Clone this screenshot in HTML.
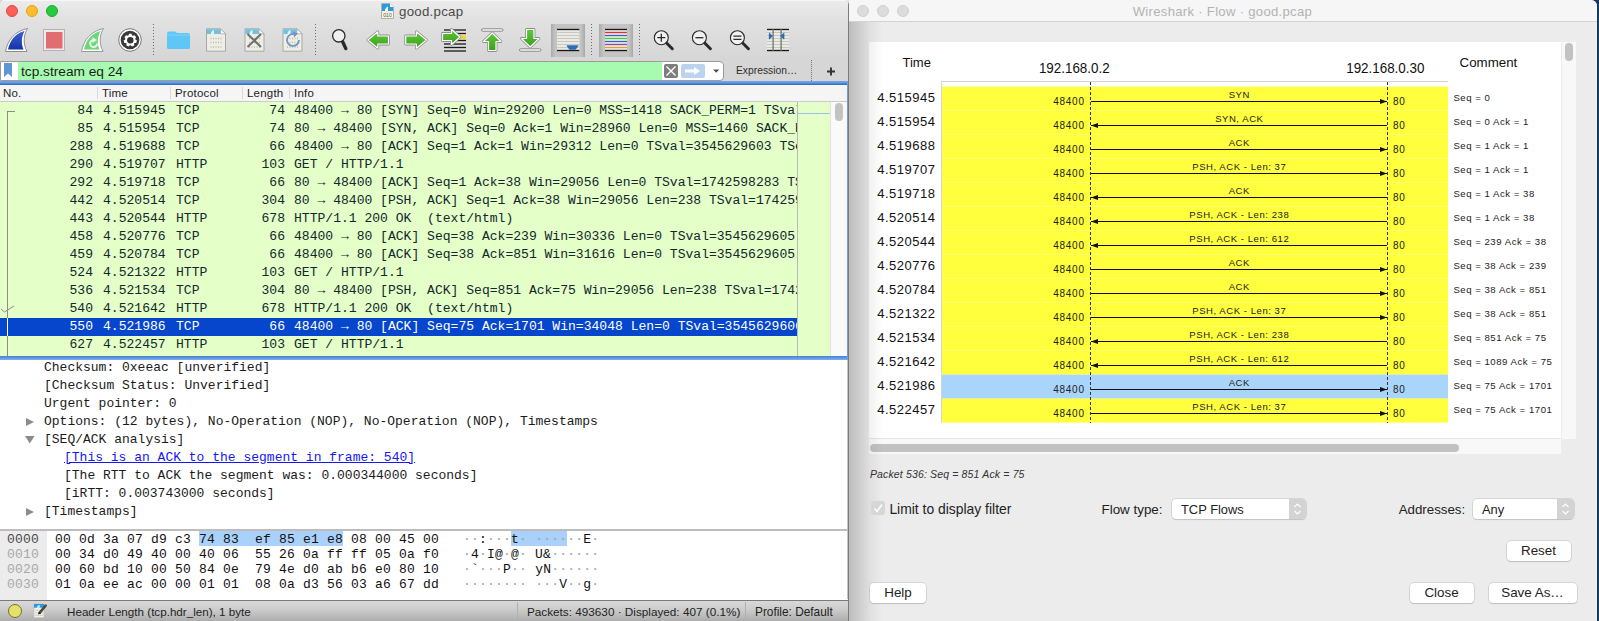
<!DOCTYPE html>
<html><head><meta charset="utf-8">
<style>
*{box-sizing:border-box}
html,body{margin:0;padding:0}
body{width:1599px;height:621px;overflow:hidden;position:relative;background:#183a60;font-family:"Liberation Sans",sans-serif;}
.a{position:absolute}
.mono{font-family:"Liberation Mono",monospace}
.t{position:absolute;white-space:pre;line-height:1}
</style></head><body>

<div class="a" style="left:0;top:0;width:12px;height:12px;background:#d9d9d9"></div>
<div class="a" style="left:838px;top:0;width:22px;height:10px;background:#e4e4e4"></div>
<div class="a" id="main" style="left:0;top:0;width:849px;height:621px;background:#d6d6d6;overflow:hidden;border-top-left-radius:5px;border-top-right-radius:5px">
<div class="a" style="left:0;top:0;width:849px;height:59px;background:linear-gradient(#ececec,#e2e2e2 30%,#d6d6d6)"></div>
<div class="a" style="left:0;top:0;width:849px;height:1px;background:#f7f7f7"></div>
<div class="a" style="left:6px;top:5px;width:12px;height:12px;border-radius:50%;background:#fe5f57;border:0.5px solid #e2463f"></div>
<div class="a" style="left:26px;top:5px;width:12px;height:12px;border-radius:50%;background:#febc2e;border:0.5px solid #e1a116"></div>
<div class="a" style="left:46px;top:5px;width:12px;height:12px;border-radius:50%;background:#28c840;border:0.5px solid #14ae2a"></div>
<div class="t" style="left:399px;top:5.2px;font-size:13.3px;letter-spacing:0.25px;color:#4a4a4a">good.pcap</div>
<svg class="a" style="left:381px;top:3px" width="13" height="16"><path d="M0.5 0.5H9L12.5 4V15.5H0.5Z" fill="#f6f3dc" stroke="#a0a0a0" stroke-width="0.8"/><path d="M1 1H9V4H12V8H1Z" fill="#2a9be0"/><path d="M4 8C4 6 5 4 7 3.5V8Z" fill="#fff"/><path d="M9 0.5V4H12.5Z" fill="#fff"/><text x="6.5" y="13.5" font-size="5" text-anchor="middle" fill="#555" font-family="Liberation Sans">010</text></svg>
<svg class="a" style="left:0;top:0" width="849" height="59" viewBox="0 0 849 59"><defs><linearGradient id="gb" x1="0" y1="0" x2="0" y2="1"><stop offset="0" stop-color="#3d5fd6"/><stop offset="1" stop-color="#1535a6"/></linearGradient><linearGradient id="gg" x1="0" y1="0" x2="0" y2="1"><stop offset="0" stop-color="#5fc93a"/><stop offset="1" stop-color="#3c9e1e"/></linearGradient><linearGradient id="pb" x1="0" y1="0" x2="1" y2="0"><stop offset="0" stop-color="#a9a9a9"/><stop offset="0.12" stop-color="#c4c4c4"/><stop offset="0.88" stop-color="#c4c4c4"/><stop offset="1" stop-color="#a9a9a9"/></linearGradient></defs><path d="M5.5 51.5C7.5 40 15 31 27.5 28.5C24 34 22.5 43 27 51.5Z" fill="#fff" stroke="#8e8e8e" stroke-width="1"/><path d="M8 49.5C10 40 16 33 24.5 31C22 36 20.5 42 23.5 49.5Z" fill="url(#gb)"/><rect x="43.5" y="29.5" width="21" height="21" fill="#ececec" stroke="#b3b3b3" stroke-width="1"/><rect x="46" y="32" width="16.5" height="16.5" fill="#e16c72"/><path d="M81.5 51.5C83.5 40 91 31 103.5 28.5C100 34 98.5 43 103 51.5Z" fill="#fff" stroke="#9a9a9a" stroke-width="1"/><path d="M84 49.5C86 40 92 33 100.5 31C98 36 96.5 42 99.5 49.5Z" fill="#6cd87a"/><path d="M97.2 43.5A3.5 3.5 0 1 1 93.7 40" fill="none" stroke="#e8f5e8" stroke-width="1.9"/><path d="M92.5 37L97 40L92.5 43Z" fill="#e8f5e8"/><circle cx="130" cy="40" r="11.3" fill="#fff" stroke="#777" stroke-width="1"/><circle cx="130" cy="40" r="9.3" fill="#3a3a3a"/><path d="M128.50 35.43 L128.99 33.73 L131.61 33.73 L132.10 35.43 L132.91 35.82 L134.54 35.14 L136.17 37.19 L135.15 38.63 L135.35 39.51 L136.90 40.36 L136.31 42.92 L134.55 43.01 L133.99 43.72 L134.29 45.46 L131.93 46.60 L130.75 45.28 L129.85 45.28 L128.67 46.60 L126.31 45.46 L126.61 43.72 L126.05 43.01 L124.29 42.92 L123.70 40.36 L125.25 39.51 L125.45 38.63 L124.43 37.19 L126.06 35.14 L127.69 35.82Z" fill="#fff"/><circle cx="130.3" cy="40.2" r="3.2" fill="#333"/><line x1="153.5" y1="24" x2="153.5" y2="55" stroke="#6a6a6a" stroke-width="1" stroke-dasharray="1,2"/><line x1="315.5" y1="24" x2="315.5" y2="55" stroke="#6a6a6a" stroke-width="1" stroke-dasharray="1,2"/><line x1="591.5" y1="24" x2="591.5" y2="55" stroke="#6a6a6a" stroke-width="1" stroke-dasharray="1,2"/><line x1="639.5" y1="24" x2="639.5" y2="55" stroke="#6a6a6a" stroke-width="1" stroke-dasharray="1,2"/><path d="M167 33.5Q167 31.5 169 31.5H175L177 33H188.5Q190 33 190 34.5V47.5Q190 49 188.5 49H168.5Q167 49 167 47.5Z" fill="#5ec7f6"/><rect x="167" y="34.5" width="23" height="1" fill="#7fd6fb"/><path d="M206.5 28.8H220.5 L225.5 33.8V51.2H206.5Z" fill="#efeee4" stroke="#a7a7a7" stroke-width="1"/><path d="M207 29.3H220.3V34H207Z" fill="#6ec1e6"/><path d="M220.5 28.8V33.8H225.5Z" fill="#fff" stroke="#a7a7a7" stroke-width="0.8"/><path d="M211 34C211 32 212 30.5 214 30V34Z" fill="#efeee4"/><line x1="210.5" y1="38.5" x2="222" y2="38.5" stroke="#b9b9ae" stroke-width="1.6" stroke-dasharray="1,1.5"/><line x1="210.5" y1="42.5" x2="222" y2="42.5" stroke="#b9b9ae" stroke-width="1.6" stroke-dasharray="1,1.5"/><line x1="210.5" y1="47" x2="222" y2="47" stroke="#b9b9ae" stroke-width="1.6" stroke-dasharray="1,1.5"/><path d="M245.0 28.8H259.0 L264.0 33.8V51.2H245.0Z" fill="#efeee4" stroke="#a7a7a7" stroke-width="1"/><path d="M245.5 29.3H258.8V34H245.5Z" fill="#6ec1e6"/><path d="M259.0 28.8V33.8H264.0Z" fill="#fff" stroke="#a7a7a7" stroke-width="0.8"/><path d="M249.5 34C249.5 32 250.5 30.5 252.5 30V34Z" fill="#efeee4"/><line x1="249.0" y1="38.5" x2="260.5" y2="38.5" stroke="#b9b9ae" stroke-width="1.6" stroke-dasharray="1,1.5"/><line x1="249.0" y1="42.5" x2="260.5" y2="42.5" stroke="#b9b9ae" stroke-width="1.6" stroke-dasharray="1,1.5"/><line x1="249.0" y1="47" x2="260.5" y2="47" stroke="#b9b9ae" stroke-width="1.6" stroke-dasharray="1,1.5"/><path d="M247.5 34L261.0 47M261.0 34L247.5 47" stroke="#707070" stroke-width="2"/><path d="M283.0 28.8H297.0 L302.0 33.8V51.2H283.0Z" fill="#efeee4" stroke="#a7a7a7" stroke-width="1"/><path d="M283.5 29.3H296.8V34H283.5Z" fill="#6ec1e6"/><path d="M297.0 28.8V33.8H302.0Z" fill="#fff" stroke="#a7a7a7" stroke-width="0.8"/><path d="M287.5 34C287.5 32 288.5 30.5 290.5 30V34Z" fill="#efeee4"/><line x1="287.0" y1="38.5" x2="298.5" y2="38.5" stroke="#b9b9ae" stroke-width="1.6" stroke-dasharray="1,1.5"/><line x1="287.0" y1="42.5" x2="298.5" y2="42.5" stroke="#b9b9ae" stroke-width="1.6" stroke-dasharray="1,1.5"/><line x1="287.0" y1="47" x2="298.5" y2="47" stroke="#b9b9ae" stroke-width="1.6" stroke-dasharray="1,1.5"/><path d="M295.5 34.5A6 6 0 1 0 299.0 40" fill="none" stroke="#6f95c4" stroke-width="1.8"/><path d="M293.0 31.5L298.0 33.5L294.0 37.5Z" fill="#6f95c4"/><circle cx="338.8" cy="35.8" r="6.2" fill="#f1f1f1" stroke="#2a2a2a" stroke-width="1.3"/><line x1="342.8" y1="42" x2="345.8" y2="48.6" stroke="#2a2a2a" stroke-width="3.4" stroke-linecap="round"/><path d="M367.8 40L377.8 31.8V36H388.5V44H377.8V48.2Z" fill="none" stroke="#8e8e8e" stroke-width="2.8" stroke-linejoin="round"/><path d="M367.8 40L377.8 31.8V36H388.5V44H377.8V48.2Z" fill="url(#gg)" stroke="#fff" stroke-width="1.2" stroke-linejoin="round"/><path d="M426.4 40L416.4 31.8V36H405.7V44H416.4V48.2Z" fill="none" stroke="#8e8e8e" stroke-width="2.8" stroke-linejoin="round"/><path d="M426.4 40L416.4 31.8V36H405.7V44H416.4V48.2Z" fill="url(#gg)" stroke="#fff" stroke-width="1.2" stroke-linejoin="round"/><rect x="444" y="29.35" width="22" height="1.3" fill="#1a1a1a"/><rect x="444" y="32.85" width="22" height="1.3" fill="#1a1a1a"/><rect x="444" y="36.35" width="22" height="1.3" fill="#1a1a1a"/><rect x="444" y="39.85" width="22" height="1.3" fill="#1a1a1a"/><rect x="444" y="43.35" width="22" height="1.3" fill="#1a1a1a"/><rect x="444" y="46.85" width="22" height="1.3" fill="#1a1a1a"/><rect x="444" y="50.35" width="22" height="1.3" fill="#1a1a1a"/><rect x="457" y="35.5" width="9" height="3.5" fill="#f5d52a"/><path d="M460 37L451.5 29.5V33.5H442.5V40.5H451.5V44.5Z" fill="none" stroke="#8e8e8e" stroke-width="2.8" stroke-linejoin="round"/><path d="M460 37L451.5 29.5V33.5H442.5V40.5H451.5V44.5Z" fill="url(#gg)" stroke="#fff" stroke-width="1.2" stroke-linejoin="round"/><rect x="481.5" y="28.8" width="21.5" height="2.4" rx="1.2" fill="#fff" stroke="#7c7c7c" stroke-width="0.9"/><path d="M492.2 33L501 41.5H496V50.5H488.5V41.5H483.5Z" fill="none" stroke="#8e8e8e" stroke-width="2.8" stroke-linejoin="round"/><path d="M492.2 33L501 41.5H496V50.5H488.5V41.5H483.5Z" fill="url(#gg)" stroke="#fff" stroke-width="1.2" stroke-linejoin="round"/><rect x="519.5" y="48.8" width="21.5" height="2.4" rx="1.2" fill="#fff" stroke="#7c7c7c" stroke-width="0.9"/><path d="M530.2 47L539 38.5H534V29.5H526.5V38.5H521.5Z" fill="none" stroke="#8e8e8e" stroke-width="2.8" stroke-linejoin="round"/><path d="M530.2 47L539 38.5H534V29.5H526.5V38.5H521.5Z" fill="url(#gg)" stroke="#fff" stroke-width="1.2" stroke-linejoin="round"/><rect x="551" y="24" width="34" height="33" fill="url(#pb)"/><rect x="557" y="29" width="22.3" height="22" fill="#f4f4f0"/><rect x="557" y="28.8" width="22.3" height="1.4" fill="#1a1a1a"/><rect x="557" y="31.8" width="22.3" height="1.4" fill="#c8c8be"/><rect x="557" y="34.8" width="22.3" height="1.4" fill="#c8c8be"/><rect x="557" y="37.8" width="22.3" height="1.4" fill="#c8c8be"/><rect x="557" y="40.8" width="22.3" height="1.4" fill="#c8c8be"/><rect x="557" y="43.8" width="22.3" height="1.4" fill="#c8c8be"/><rect x="557" y="46.8" width="22.3" height="1.4" fill="#c8c8be"/><rect x="557" y="49.8" width="22.3" height="1.4" fill="#1a1a1a"/><path d="M566.5 45.3H578.5Q578 47 575.5 49.8H569.5Q567 47 566.5 45.3Z" fill="#2d6db4"/><rect x="599" y="24" width="34" height="33" fill="url(#pb)"/><rect x="605" y="29" width="22" height="22" fill="#f4f4f0"/><rect x="605" y="28.8" width="22" height="1.4" fill="#1a1a1a"/><rect x="605" y="31.8" width="22" height="1.4" fill="#e03030"/><rect x="605" y="34.8" width="22" height="1.4" fill="#2f66c0"/><rect x="605" y="37.8" width="22" height="1.4" fill="#55c040"/><rect x="605" y="40.8" width="22" height="1.4" fill="#2f66c0"/><rect x="605" y="43.8" width="22" height="1.4" fill="#8a4a9a"/><rect x="605" y="46.8" width="22" height="1.4" fill="#d9a030"/><rect x="605" y="49.8" width="22" height="1.4" fill="#1a1a1a"/><circle cx="661.3" cy="37.7" r="7" fill="#f1f1f1" stroke="#2a2a2a" stroke-width="1.1"/><line x1="666.8" y1="43.2" x2="672.3" y2="48.7" stroke="#2a2a2a" stroke-width="3" stroke-linecap="round"/><path d="M657.3 37.7H665.3M661.3 33.7V41.7" stroke="#2a2a2a" stroke-width="1.3"/><circle cx="699.4" cy="37.7" r="7" fill="#f1f1f1" stroke="#2a2a2a" stroke-width="1.1"/><line x1="704.9" y1="43.2" x2="710.4" y2="48.7" stroke="#2a2a2a" stroke-width="3" stroke-linecap="round"/><path d="M695.4 37.7H703.4" stroke="#2a2a2a" stroke-width="1.3"/><circle cx="737.4" cy="37.7" r="7" fill="#f1f1f1" stroke="#2a2a2a" stroke-width="1.1"/><line x1="742.9" y1="43.2" x2="748.4" y2="48.7" stroke="#2a2a2a" stroke-width="3" stroke-linecap="round"/><path d="M733.4 36.1H741.4M733.4 39.300000000000004H741.4" stroke="#2a2a2a" stroke-width="1.2"/><rect x="767" y="29" width="22" height="22" fill="#f4f4f0"/><rect x="767" y="28.8" width="22" height="1.4" fill="#1a1a1a"/><rect x="767" y="31.8" width="22" height="1.4" fill="#c8c8be"/><rect x="767" y="34.8" width="22" height="1.4" fill="#c8c8be"/><rect x="767" y="37.8" width="22" height="1.4" fill="#c8c8be"/><rect x="767" y="40.8" width="22" height="1.4" fill="#c8c8be"/><rect x="767" y="43.8" width="22" height="1.4" fill="#c8c8be"/><rect x="767" y="46.8" width="22" height="1.4" fill="#c8c8be"/><rect x="767" y="49.8" width="22" height="1.4" fill="#1a1a1a"/><rect x="772.5" y="29" width="1.2" height="22" fill="#6a6a6a"/><rect x="780.5" y="29" width="1.2" height="22" fill="#6a6a6a"/><path d="M769 32.5Q768.5 36 769 39.7L773 36.1Z" fill="#2d6db4"/><path d="M784.2 32.5Q784.7 36 784.2 39.7L780.2 36.1Z" fill="#2d6db4"/></svg>
<div class="a" style="left:0;top:61px;width:724px;height:20px;border:1px solid #9b9b9b;border-radius:0 4px 4px 0;background:#fff"></div>
<div class="a" style="left:18px;top:62px;width:644px;height:18px;background:#a7fbb0"></div>
<svg class="a" style="left:3px;top:63px" width="10" height="15" viewBox="0 0 10 15"><path d="M1 0H9V14L5 10.5L1 14Z" fill="#5f95d3"/></svg>
<div class="t" style="left:21px;top:65px;font-size:13.7px;color:#1b1b1b">tcp.stream eq 24</div>
<div class="a" style="left:664px;top:64px;width:14px;height:14px;background:#7d7d7d;border-radius:2px"></div>
<svg class="a" style="left:664px;top:64px" width="14" height="14"><path d="M2.5 2.5L11.5 11.5M11.5 2.5L2.5 11.5" stroke="#fff" stroke-width="1.4"/></svg>
<div class="a" style="left:681px;top:64px;width:24px;height:14px;background:#bcd3ef;border-radius:2px"></div>
<svg class="a" style="left:681px;top:64px" width="24" height="14"><path d="M4 5.5H13V3L19 7L13 11V8.5H4Z" fill="#fff"/></svg>
<svg class="a" style="left:712px;top:69px" width="9" height="5"><path d="M1.2 0.5H7.2L4.2 3.8Z" fill="#4a4a4a"/></svg>
<div class="t" style="left:736px;top:66px;font-size:10.3px;color:#2e2e2e">Expression…</div>
<div class="a" style="left:811px;top:60px;width:1px;height:23px;border-left:1px dotted #777"></div>
<svg class="a" style="left:825px;top:66px" width="12" height="12"><path d="M6 1.5V9.5M2 5.5H10" stroke="#333" stroke-width="1.9"/></svg>
<div class="a" style="left:0;top:81px;width:849px;height:4px;background:linear-gradient(#70a4ea,#6a9ee6 35%,#2b66b2)"></div>
<div class="a" style="left:0;top:85px;width:849px;height:17px;background:#f5f5f5;border-bottom:1px solid #cbcbcb"></div>
<div class="a" style="left:97px;top:87px;width:1px;height:12px;background:#d9d9d9"></div>
<div class="a" style="left:170px;top:87px;width:1px;height:12px;background:#d9d9d9"></div>
<div class="a" style="left:242px;top:87px;width:1px;height:12px;background:#d9d9d9"></div>
<div class="a" style="left:289px;top:87px;width:1px;height:12px;background:#d9d9d9"></div>
<div class="t" style="left:3px;top:88px;font-size:11.5px;letter-spacing:0.2px;color:#1e1e1e">No.</div>
<div class="t" style="left:102px;top:88px;font-size:11.5px;letter-spacing:0.2px;color:#1e1e1e">Time</div>
<div class="t" style="left:175px;top:88px;font-size:11.5px;letter-spacing:0.2px;color:#1e1e1e">Protocol</div>
<div class="t" style="left:247px;top:88px;font-size:11.5px;letter-spacing:0.2px;color:#1e1e1e">Length</div>
<div class="t" style="left:294px;top:88px;font-size:11.5px;letter-spacing:0.2px;color:#1e1e1e">Info</div>
<div class="a" style="left:0;top:102px;width:849px;height:254px;background:#e4ffc7"></div>
<div class="t mono" style="left:0;top:102px;width:93px;text-align:right;font-size:13.05px;line-height:18px;color:#12272e">84</div>
<div class="t mono" style="left:103px;top:102px;font-size:13.05px;line-height:18px;color:#12272e">4.515945</div>
<div class="t mono" style="left:176px;top:102px;font-size:13.05px;line-height:18px;color:#12272e">TCP</div>
<div class="t mono" style="left:243px;top:102px;width:42px;text-align:right;font-size:13.05px;line-height:18px;color:#12272e">74</div>
<div class="a" style="left:294px;top:102px;width:503px;height:18px;overflow:hidden"><div class="t mono" style="left:0;top:0;font-size:13.05px;line-height:18px;color:#12272e">48400 → 80 [SYN] Seq=0 Win=29200 Len=0 MSS=1418 SACK_PERM=1 TSval=3545629602 TSecr=0 WS=128</div></div>
<div class="t mono" style="left:0;top:120px;width:93px;text-align:right;font-size:13.05px;line-height:18px;color:#12272e">85</div>
<div class="t mono" style="left:103px;top:120px;font-size:13.05px;line-height:18px;color:#12272e">4.515954</div>
<div class="t mono" style="left:176px;top:120px;font-size:13.05px;line-height:18px;color:#12272e">TCP</div>
<div class="t mono" style="left:243px;top:120px;width:42px;text-align:right;font-size:13.05px;line-height:18px;color:#12272e">74</div>
<div class="a" style="left:294px;top:120px;width:503px;height:18px;overflow:hidden"><div class="t mono" style="left:0;top:0;font-size:13.05px;line-height:18px;color:#12272e">80 → 48400 [SYN, ACK] Seq=0 Ack=1 Win=28960 Len=0 MSS=1460 SACK_PERM=1 TSval=1742598281</div></div>
<div class="t mono" style="left:0;top:138px;width:93px;text-align:right;font-size:13.05px;line-height:18px;color:#12272e">288</div>
<div class="t mono" style="left:103px;top:138px;font-size:13.05px;line-height:18px;color:#12272e">4.519688</div>
<div class="t mono" style="left:176px;top:138px;font-size:13.05px;line-height:18px;color:#12272e">TCP</div>
<div class="t mono" style="left:243px;top:138px;width:42px;text-align:right;font-size:13.05px;line-height:18px;color:#12272e">66</div>
<div class="a" style="left:294px;top:138px;width:503px;height:18px;overflow:hidden"><div class="t mono" style="left:0;top:0;font-size:13.05px;line-height:18px;color:#12272e">48400 → 80 [ACK] Seq=1 Ack=1 Win=29312 Len=0 TSval=3545629603 TSecr=1742598281</div></div>
<div class="t mono" style="left:0;top:156px;width:93px;text-align:right;font-size:13.05px;line-height:18px;color:#12272e">290</div>
<div class="t mono" style="left:103px;top:156px;font-size:13.05px;line-height:18px;color:#12272e">4.519707</div>
<div class="t mono" style="left:176px;top:156px;font-size:13.05px;line-height:18px;color:#12272e">HTTP</div>
<div class="t mono" style="left:243px;top:156px;width:42px;text-align:right;font-size:13.05px;line-height:18px;color:#12272e">103</div>
<div class="a" style="left:294px;top:156px;width:503px;height:18px;overflow:hidden"><div class="t mono" style="left:0;top:0;font-size:13.05px;line-height:18px;color:#12272e">GET / HTTP/1.1 </div></div>
<div class="t mono" style="left:0;top:174px;width:93px;text-align:right;font-size:13.05px;line-height:18px;color:#12272e">292</div>
<div class="t mono" style="left:103px;top:174px;font-size:13.05px;line-height:18px;color:#12272e">4.519718</div>
<div class="t mono" style="left:176px;top:174px;font-size:13.05px;line-height:18px;color:#12272e">TCP</div>
<div class="t mono" style="left:243px;top:174px;width:42px;text-align:right;font-size:13.05px;line-height:18px;color:#12272e">66</div>
<div class="a" style="left:294px;top:174px;width:503px;height:18px;overflow:hidden"><div class="t mono" style="left:0;top:0;font-size:13.05px;line-height:18px;color:#12272e">80 → 48400 [ACK] Seq=1 Ack=38 Win=29056 Len=0 TSval=1742598283 TSecr=3545629603</div></div>
<div class="t mono" style="left:0;top:192px;width:93px;text-align:right;font-size:13.05px;line-height:18px;color:#12272e">442</div>
<div class="t mono" style="left:103px;top:192px;font-size:13.05px;line-height:18px;color:#12272e">4.520514</div>
<div class="t mono" style="left:176px;top:192px;font-size:13.05px;line-height:18px;color:#12272e">TCP</div>
<div class="t mono" style="left:243px;top:192px;width:42px;text-align:right;font-size:13.05px;line-height:18px;color:#12272e">304</div>
<div class="a" style="left:294px;top:192px;width:503px;height:18px;overflow:hidden"><div class="t mono" style="left:0;top:0;font-size:13.05px;line-height:18px;color:#12272e">80 → 48400 [PSH, ACK] Seq=1 Ack=38 Win=29056 Len=238 TSval=1742598283 TSecr=3545629603</div></div>
<div class="t mono" style="left:0;top:210px;width:93px;text-align:right;font-size:13.05px;line-height:18px;color:#12272e">443</div>
<div class="t mono" style="left:103px;top:210px;font-size:13.05px;line-height:18px;color:#12272e">4.520544</div>
<div class="t mono" style="left:176px;top:210px;font-size:13.05px;line-height:18px;color:#12272e">HTTP</div>
<div class="t mono" style="left:243px;top:210px;width:42px;text-align:right;font-size:13.05px;line-height:18px;color:#12272e">678</div>
<div class="a" style="left:294px;top:210px;width:503px;height:18px;overflow:hidden"><div class="t mono" style="left:0;top:0;font-size:13.05px;line-height:18px;color:#12272e">HTTP/1.1 200 OK  (text/html)</div></div>
<div class="t mono" style="left:0;top:228px;width:93px;text-align:right;font-size:13.05px;line-height:18px;color:#12272e">458</div>
<div class="t mono" style="left:103px;top:228px;font-size:13.05px;line-height:18px;color:#12272e">4.520776</div>
<div class="t mono" style="left:176px;top:228px;font-size:13.05px;line-height:18px;color:#12272e">TCP</div>
<div class="t mono" style="left:243px;top:228px;width:42px;text-align:right;font-size:13.05px;line-height:18px;color:#12272e">66</div>
<div class="a" style="left:294px;top:228px;width:503px;height:18px;overflow:hidden"><div class="t mono" style="left:0;top:0;font-size:13.05px;line-height:18px;color:#12272e">48400 → 80 [ACK] Seq=38 Ack=239 Win=30336 Len=0 TSval=3545629605 TSecr=1742598283</div></div>
<div class="t mono" style="left:0;top:246px;width:93px;text-align:right;font-size:13.05px;line-height:18px;color:#12272e">459</div>
<div class="t mono" style="left:103px;top:246px;font-size:13.05px;line-height:18px;color:#12272e">4.520784</div>
<div class="t mono" style="left:176px;top:246px;font-size:13.05px;line-height:18px;color:#12272e">TCP</div>
<div class="t mono" style="left:243px;top:246px;width:42px;text-align:right;font-size:13.05px;line-height:18px;color:#12272e">66</div>
<div class="a" style="left:294px;top:246px;width:503px;height:18px;overflow:hidden"><div class="t mono" style="left:0;top:0;font-size:13.05px;line-height:18px;color:#12272e">48400 → 80 [ACK] Seq=38 Ack=851 Win=31616 Len=0 TSval=3545629605 TSecr=1742598283</div></div>
<div class="t mono" style="left:0;top:264px;width:93px;text-align:right;font-size:13.05px;line-height:18px;color:#12272e">524</div>
<div class="t mono" style="left:103px;top:264px;font-size:13.05px;line-height:18px;color:#12272e">4.521322</div>
<div class="t mono" style="left:176px;top:264px;font-size:13.05px;line-height:18px;color:#12272e">HTTP</div>
<div class="t mono" style="left:243px;top:264px;width:42px;text-align:right;font-size:13.05px;line-height:18px;color:#12272e">103</div>
<div class="a" style="left:294px;top:264px;width:503px;height:18px;overflow:hidden"><div class="t mono" style="left:0;top:0;font-size:13.05px;line-height:18px;color:#12272e">GET / HTTP/1.1 </div></div>
<div class="t mono" style="left:0;top:282px;width:93px;text-align:right;font-size:13.05px;line-height:18px;color:#12272e">536</div>
<div class="t mono" style="left:103px;top:282px;font-size:13.05px;line-height:18px;color:#12272e">4.521534</div>
<div class="t mono" style="left:176px;top:282px;font-size:13.05px;line-height:18px;color:#12272e">TCP</div>
<div class="t mono" style="left:243px;top:282px;width:42px;text-align:right;font-size:13.05px;line-height:18px;color:#12272e">304</div>
<div class="a" style="left:294px;top:282px;width:503px;height:18px;overflow:hidden"><div class="t mono" style="left:0;top:0;font-size:13.05px;line-height:18px;color:#12272e">80 → 48400 [PSH, ACK] Seq=851 Ack=75 Win=29056 Len=238 TSval=1742598285 TSecr=3545629605</div></div>
<div class="t mono" style="left:0;top:300px;width:93px;text-align:right;font-size:13.05px;line-height:18px;color:#12272e">540</div>
<div class="t mono" style="left:103px;top:300px;font-size:13.05px;line-height:18px;color:#12272e">4.521642</div>
<div class="t mono" style="left:176px;top:300px;font-size:13.05px;line-height:18px;color:#12272e">HTTP</div>
<div class="t mono" style="left:243px;top:300px;width:42px;text-align:right;font-size:13.05px;line-height:18px;color:#12272e">678</div>
<div class="a" style="left:294px;top:300px;width:503px;height:18px;overflow:hidden"><div class="t mono" style="left:0;top:0;font-size:13.05px;line-height:18px;color:#12272e">HTTP/1.1 200 OK  (text/html)</div></div>
<div class="a" style="left:0;top:318px;width:797px;height:18px;background:#0546cc"></div>
<div class="t mono" style="left:0;top:318px;width:93px;text-align:right;font-size:13.05px;line-height:18px;color:#ffffff">550</div>
<div class="t mono" style="left:103px;top:318px;font-size:13.05px;line-height:18px;color:#ffffff">4.521986</div>
<div class="t mono" style="left:176px;top:318px;font-size:13.05px;line-height:18px;color:#ffffff">TCP</div>
<div class="t mono" style="left:243px;top:318px;width:42px;text-align:right;font-size:13.05px;line-height:18px;color:#ffffff">66</div>
<div class="a" style="left:294px;top:318px;width:503px;height:18px;overflow:hidden"><div class="t mono" style="left:0;top:0;font-size:13.05px;line-height:18px;color:#ffffff">48400 → 80 [ACK] Seq=75 Ack=1701 Win=34048 Len=0 TSval=3545629606 TSecr=1742598285</div></div>
<div class="t mono" style="left:0;top:336px;width:93px;text-align:right;font-size:13.05px;line-height:18px;color:#12272e">627</div>
<div class="t mono" style="left:103px;top:336px;font-size:13.05px;line-height:18px;color:#12272e">4.522457</div>
<div class="t mono" style="left:176px;top:336px;font-size:13.05px;line-height:18px;color:#12272e">HTTP</div>
<div class="t mono" style="left:243px;top:336px;width:42px;text-align:right;font-size:13.05px;line-height:18px;color:#12272e">103</div>
<div class="a" style="left:294px;top:336px;width:503px;height:18px;overflow:hidden"><div class="t mono" style="left:0;top:0;font-size:13.05px;line-height:18px;color:#12272e">GET / HTTP/1.1 </div></div>
<div class="a" style="left:7px;top:111px;width:1px;height:245px;background:#8c8c8c"></div>
<div class="a" style="left:7px;top:111px;width:8px;height:1px;background:#8c8c8c"></div>
<div class="a" style="left:7px;top:318px;width:1px;height:18px;background:#fff"></div>
<svg class="a" style="left:0;top:304px" width="16" height="12"><path d="M1 5L4.5 8L14 2" stroke="#8c8c8c" stroke-width="1" fill="none"/></svg>
<div class="a" style="left:797px;top:102px;width:1px;height:254px;background:#b9b9b9"></div>
<div class="a" style="left:798px;top:113px;width:32px;height:1px;background:#9ec4ea"></div>
<div class="a" style="left:830px;top:102px;width:18px;height:254px;background:#fafafa;border-left:1px solid #e3e3e3"></div>
<div class="a" style="left:835px;top:103px;width:8px;height:18px;background:#c3c3c3;border-radius:4px"></div>
<div class="a" style="left:0;top:356px;width:849px;height:4px;background:linear-gradient(#4a80d0,#5f95e0 45%,#79b0f5)"></div>
<div class="a" style="left:0;top:360px;width:849px;height:169px;background:#fff;overflow:hidden">
<div class="t mono" style="left:44px;top:-1px;font-size:13px;line-height:18px;color:#1b1b1b;">Checksum: 0xeeac [unverified]</div>
<div class="t mono" style="left:44px;top:17px;font-size:13px;line-height:18px;color:#1b1b1b;">[Checksum Status: Unverified]</div>
<div class="t mono" style="left:44px;top:35px;font-size:13px;line-height:18px;color:#1b1b1b;">Urgent pointer: 0</div>
<svg class="a" style="left:25px;top:57px" width="10" height="10"><path d="M1 1L9 5L1 9Z" fill="#8c8c8c"/></svg>
<div class="t mono" style="left:44px;top:53px;font-size:13px;line-height:18px;color:#1b1b1b;">Options: (12 bytes), No-Operation (NOP), No-Operation (NOP), Timestamps</div>
<svg class="a" style="left:25px;top:75px" width="10" height="10"><path d="M0 1H9.5L4.75 8.5Z" fill="#8c8c8c"/></svg>
<div class="t mono" style="left:44px;top:71px;font-size:13px;line-height:18px;color:#1b1b1b;">[SEQ/ACK analysis]</div>
<div class="t mono" style="left:64px;top:89px;font-size:13px;line-height:18px;color:#1616f2;text-decoration:underline;">[This is an ACK to the segment in frame: 540]</div>
<div class="t mono" style="left:64px;top:107px;font-size:13px;line-height:18px;color:#1b1b1b;">[The RTT to ACK the segment was: 0.000344000 seconds]</div>
<div class="t mono" style="left:64px;top:125px;font-size:13px;line-height:18px;color:#1b1b1b;">[iRTT: 0.003743000 seconds]</div>
<svg class="a" style="left:25px;top:147px" width="10" height="10"><path d="M1 1L9 5L1 9Z" fill="#8c8c8c"/></svg>
<div class="t mono" style="left:44px;top:143px;font-size:13px;line-height:18px;color:#1b1b1b;">[Timestamps]</div>
</div>
<div class="a" style="left:0;top:529px;width:849px;height:2px;background:#bdbdbd"></div>
<div class="a" style="left:0;top:531px;width:849px;height:69px;background:#fff"></div>
<div class="a" style="left:0;top:531px;width:47px;height:69px;background:#ececec"></div>
<div class="a" style="left:199px;top:531px;width:144px;height:15px;background:#a9d1fb"></div>
<div class="a" style="left:511px;top:531px;width:56px;height:15px;background:#a9d1fb"></div>
<div class="t mono" style="left:7px;top:532px;font-size:13px;line-height:15px;letter-spacing:0.2px;color:#4a4a4a">0000</div>
<div class="t mono" style="left:55px;top:532px;font-size:13px;line-height:15px;letter-spacing:0.2px;color:#111">00 0d 3a 07 d9 c3 74 83  ef 85 e1 e8 08 00 45 00</div>
<div class="t mono" style="left:463px;top:532px;font-size:13px;line-height:15px;letter-spacing:0.2px;color:#111"><span style='color:#a0a0a0'>·</span><span style='color:#a0a0a0'>·</span>:<span style='color:#a0a0a0'>·</span><span style='color:#a0a0a0'>·</span><span style='color:#a0a0a0'>·</span>t<span style='color:#a0a0a0'>·</span> <span style='color:#a0a0a0'>·</span><span style='color:#a0a0a0'>·</span><span style='color:#a0a0a0'>·</span><span style='color:#a0a0a0'>·</span><span style='color:#a0a0a0'>·</span><span style='color:#a0a0a0'>·</span>E<span style='color:#a0a0a0'>·</span></div>
<div class="t mono" style="left:7px;top:547px;font-size:13px;line-height:15px;letter-spacing:0.2px;color:#a8a8a8">0010</div>
<div class="t mono" style="left:55px;top:547px;font-size:13px;line-height:15px;letter-spacing:0.2px;color:#111">00 34 d0 49 40 00 40 06  55 26 0a ff ff 05 0a f0</div>
<div class="t mono" style="left:463px;top:547px;font-size:13px;line-height:15px;letter-spacing:0.2px;color:#111"><span style='color:#a0a0a0'>·</span>4<span style='color:#a0a0a0'>·</span>I@<span style='color:#a0a0a0'>·</span>@<span style='color:#a0a0a0'>·</span> U&amp;<span style='color:#a0a0a0'>·</span><span style='color:#a0a0a0'>·</span><span style='color:#a0a0a0'>·</span><span style='color:#a0a0a0'>·</span><span style='color:#a0a0a0'>·</span><span style='color:#a0a0a0'>·</span></div>
<div class="t mono" style="left:7px;top:562px;font-size:13px;line-height:15px;letter-spacing:0.2px;color:#a8a8a8">0020</div>
<div class="t mono" style="left:55px;top:562px;font-size:13px;line-height:15px;letter-spacing:0.2px;color:#111">00 60 bd 10 00 50 84 0e  79 4e d0 ab b6 e0 80 10</div>
<div class="t mono" style="left:463px;top:562px;font-size:13px;line-height:15px;letter-spacing:0.2px;color:#111"><span style='color:#a0a0a0'>·</span>`<span style='color:#a0a0a0'>·</span><span style='color:#a0a0a0'>·</span><span style='color:#a0a0a0'>·</span>P<span style='color:#a0a0a0'>·</span><span style='color:#a0a0a0'>·</span> yN<span style='color:#a0a0a0'>·</span><span style='color:#a0a0a0'>·</span><span style='color:#a0a0a0'>·</span><span style='color:#a0a0a0'>·</span><span style='color:#a0a0a0'>·</span><span style='color:#a0a0a0'>·</span></div>
<div class="t mono" style="left:7px;top:577px;font-size:13px;line-height:15px;letter-spacing:0.2px;color:#a8a8a8">0030</div>
<div class="t mono" style="left:55px;top:577px;font-size:13px;line-height:15px;letter-spacing:0.2px;color:#111">01 0a ee ac 00 00 01 01  08 0a d3 56 03 a6 67 dd</div>
<div class="t mono" style="left:463px;top:577px;font-size:13px;line-height:15px;letter-spacing:0.2px;color:#111"><span style='color:#a0a0a0'>·</span><span style='color:#a0a0a0'>·</span><span style='color:#a0a0a0'>·</span><span style='color:#a0a0a0'>·</span><span style='color:#a0a0a0'>·</span><span style='color:#a0a0a0'>·</span><span style='color:#a0a0a0'>·</span><span style='color:#a0a0a0'>·</span> <span style='color:#a0a0a0'>·</span><span style='color:#a0a0a0'>·</span><span style='color:#a0a0a0'>·</span>V<span style='color:#a0a0a0'>·</span><span style='color:#a0a0a0'>·</span>g<span style='color:#a0a0a0'>·</span></div>
<div class="a" style="left:0;top:600px;width:849px;height:21px;background:linear-gradient(#d9d9d9,#cbcbcb 45%,#adadad);border-top:1px solid #7a7a7a"></div>
<div class="a" style="left:8px;top:604px;width:14px;height:14px;border-radius:50%;background:#e5e26c;border:1px solid #74721f"></div>
<svg class="a" style="left:33px;top:603px" width="15" height="16"><rect x="1" y="1" width="10" height="13.7" fill="#f3f2e6" stroke="#b5b5b5" stroke-width="0.5"/><rect x="1" y="1" width="10" height="3.7" fill="#2b9be0"/><path d="M3.8 4.7C4.3 3 5.3 2.2 6.6 1.8V4.7Z" fill="#e8f4fb"/><path d="M2.5 7.3H10M2.5 9.8H10M2.5 12.3H10" stroke="#b0b0a8" stroke-width="0.9" stroke-dasharray="1.2,0.8"/><path d="M6.8 9.6L12.6 2.6" stroke="#4a4a4a" stroke-width="2.6" stroke-linecap="round"/><path d="M5 11.6L5.9 8.9L7.8 10.5Z" fill="#111"/></svg>
<div class="t" style="left:67px;top:606px;font-size:11.65px;color:#222">Header Length (tcp.hdr_len), 1 byte</div>
<div class="a" style="left:517px;top:602px;width:1px;height:19px;background:#b0b0b0"></div>
<div class="t" style="left:527px;top:606px;font-size:11.74px;color:#222">Packets: 493630 · Displayed: 407 (0.1%)</div>
<div class="a" style="left:745px;top:602px;width:1px;height:19px;background:#b0b0b0"></div>
<div class="t" style="left:755px;top:606.5px;font-size:11.85px;color:#222">Profile: Default</div>
<div class="a" style="left:848px;top:0;width:1px;height:621px;background:#7c7c7c"></div>
<div class="a" style="left:847px;top:81px;width:1px;height:279px;background:#6f9fe0"></div>
<div class="a" style="left:847px;top:360px;width:1px;height:239px;background:#c4c4c4"></div>
</div>
<div class="a" id="dlg" style="left:849px;top:0;width:748px;height:621px;background:#ececec;overflow:hidden;border-top-right-radius:6px">
<div class="a" style="left:0;top:0;width:748px;height:22px;background:#f6f6f6;border-bottom:1px solid #d3d3d3"></div>
<div class="a" style="left:7.899999999999977px;top:5px;width:12px;height:12px;border-radius:50%;background:#dcdcdc;border:1px solid #d0d0d0"></div>
<div class="a" style="left:28px;top:5px;width:12px;height:12px;border-radius:50%;background:#dcdcdc;border:1px solid #d0d0d0"></div>
<div class="a" style="left:47.799999999999955px;top:5px;width:12px;height:12px;border-radius:50%;background:#dcdcdc;border:1px solid #d0d0d0"></div>
<div class="t" style="left:283.70000000000005px;top:4.6px;font-size:13.1px;letter-spacing:0.3px;color:#b3b3b3">Wireshark · Flow · good.pcap</div>
<div class="a" style="left:20px;top:42px;width:692px;height:397px;background:#fff;border-bottom:1px solid #e6e6e6"></div>
<div class="a" style="left:712px;top:42px;width:15px;height:397px;background:#f8f8f8;border-left:1px solid #ececec"></div>
<div class="a" style="left:716px;top:43px;width:8px;height:18px;background:#c2c2c2;border-radius:4px"></div>
<div class="a" style="left:20px;top:439px;width:692px;height:15px;background:#f8f8f8"></div>
<div class="a" style="left:21px;top:444px;width:589px;height:8px;background:#c2c2c2;border-radius:4px"></div>
<div class="t" style="left:53.5px;top:56px;font-size:13px;color:#111">Time</div>
<div class="t" style="left:189.9000000000001px;top:61px;font-size:13.4px;color:#111;transform:scaleY(1.1);transform-origin:0 20%">192.168.0.2</div>
<div class="t" style="left:497.20000000000005px;top:61px;font-size:13.4px;color:#111;transform:scaleY(1.1);transform-origin:0 20%">192.168.0.30</div>
<div class="t" style="left:610.5999999999999px;top:56px;font-size:13.3px;color:#111">Comment</div>
<div class="a" style="left:92px;top:81px;width:507px;height:1px;background:#d4d4d4"></div>
<div class="a" style="left:92px;top:81px;width:1px;height:342px;background:#d4d4d4"></div>
<svg class="a" style="left:0;top:0" width="748" height="621"><rect x="93" y="86.6" width="506" height="24" fill="#ffff3d"/><rect x="93" y="110.6" width="506" height="24" fill="#ffff3d"/><rect x="93" y="134.6" width="506" height="24" fill="#ffff3d"/><rect x="93" y="158.6" width="506" height="24" fill="#ffff3d"/><rect x="93" y="182.6" width="506" height="24" fill="#ffff3d"/><rect x="93" y="206.6" width="506" height="24" fill="#ffff3d"/><rect x="93" y="230.6" width="506" height="24" fill="#ffff3d"/><rect x="93" y="254.6" width="506" height="24" fill="#ffff3d"/><rect x="93" y="278.6" width="506" height="24" fill="#ffff3d"/><rect x="93" y="302.6" width="506" height="24" fill="#ffff3d"/><rect x="93" y="326.6" width="506" height="24" fill="#ffff3d"/><rect x="93" y="350.6" width="506" height="24" fill="#ffff3d"/><rect x="93" y="374.6" width="506" height="24" fill="#a9d5fb"/><rect x="93" y="398.6" width="506" height="24" fill="#ffff3d"/><line x1="241.5" y1="82" x2="241.5" y2="423" stroke="#333" stroke-width="1" stroke-dasharray="3,2"/><line x1="538.5" y1="82" x2="538.5" y2="423" stroke="#333" stroke-width="1" stroke-dasharray="3,2"/><line x1="242" y1="101.5" x2="538" y2="101.5" stroke="#111" stroke-width="1.2"/><path d="M538 101.5L531 98.9L531 104.1Z" fill="#111"/><line x1="242" y1="125.5" x2="538" y2="125.5" stroke="#111" stroke-width="1.2"/><path d="M242 125.5L249 122.9L249 128.1Z" fill="#111"/><line x1="242" y1="149.5" x2="538" y2="149.5" stroke="#111" stroke-width="1.2"/><path d="M538 149.5L531 146.9L531 152.1Z" fill="#111"/><line x1="242" y1="173.5" x2="538" y2="173.5" stroke="#111" stroke-width="1.2"/><path d="M538 173.5L531 170.9L531 176.1Z" fill="#111"/><line x1="242" y1="197.5" x2="538" y2="197.5" stroke="#111" stroke-width="1.2"/><path d="M242 197.5L249 194.9L249 200.1Z" fill="#111"/><line x1="242" y1="221.5" x2="538" y2="221.5" stroke="#111" stroke-width="1.2"/><path d="M242 221.5L249 218.9L249 224.1Z" fill="#111"/><line x1="242" y1="245.5" x2="538" y2="245.5" stroke="#111" stroke-width="1.2"/><path d="M242 245.5L249 242.9L249 248.1Z" fill="#111"/><line x1="242" y1="269.5" x2="538" y2="269.5" stroke="#111" stroke-width="1.2"/><path d="M538 269.5L531 266.9L531 272.1Z" fill="#111"/><line x1="242" y1="293.5" x2="538" y2="293.5" stroke="#111" stroke-width="1.2"/><path d="M538 293.5L531 290.9L531 296.1Z" fill="#111"/><line x1="242" y1="317.5" x2="538" y2="317.5" stroke="#111" stroke-width="1.2"/><path d="M538 317.5L531 314.9L531 320.1Z" fill="#111"/><line x1="242" y1="341.5" x2="538" y2="341.5" stroke="#111" stroke-width="1.2"/><path d="M242 341.5L249 338.9L249 344.1Z" fill="#111"/><line x1="242" y1="365.5" x2="538" y2="365.5" stroke="#111" stroke-width="1.2"/><path d="M242 365.5L249 362.9L249 368.1Z" fill="#111"/><line x1="242" y1="389.5" x2="538" y2="389.5" stroke="#111" stroke-width="1.2"/><path d="M538 389.5L531 386.9L531 392.1Z" fill="#111"/><line x1="242" y1="413.5" x2="538" y2="413.5" stroke="#111" stroke-width="1.2"/><path d="M538 413.5L531 410.9L531 416.1Z" fill="#111"/></svg>
<div class="t" style="left:21px;top:91.39999999999999px;width:65.5px;text-align:right;font-size:13px;letter-spacing:0.5px;color:#111">4.515945</div>
<div class="t" style="left:191px;top:96.89999999999999px;width:44.75px;text-align:right;font-size:10px;letter-spacing:0.75px;color:#222">48400</div>
<div class="t" style="left:544px;top:96.89999999999999px;font-size:10px;letter-spacing:0.75px;color:#222">80</div>
<div class="t" style="left:290.29999999999995px;top:90.3px;width:200px;text-align:center;font-size:9.5px;letter-spacing:0.56px;color:#222">SYN</div>
<div class="t" style="left:604.4000000000001px;top:93.3px;font-size:9.6px;letter-spacing:0.52px;color:#222">Seq = 0</div>
<div class="t" style="left:21px;top:115.39999999999999px;width:65.5px;text-align:right;font-size:13px;letter-spacing:0.5px;color:#111">4.515954</div>
<div class="t" style="left:191px;top:120.89999999999999px;width:44.75px;text-align:right;font-size:10px;letter-spacing:0.75px;color:#222">48400</div>
<div class="t" style="left:544px;top:120.89999999999999px;font-size:10px;letter-spacing:0.75px;color:#222">80</div>
<div class="t" style="left:290.29999999999995px;top:114.3px;width:200px;text-align:center;font-size:9.5px;letter-spacing:0.56px;color:#222">SYN, ACK</div>
<div class="t" style="left:604.4000000000001px;top:117.3px;font-size:9.6px;letter-spacing:0.52px;color:#222">Seq = 0 Ack = 1</div>
<div class="t" style="left:21px;top:139.4px;width:65.5px;text-align:right;font-size:13px;letter-spacing:0.5px;color:#111">4.519688</div>
<div class="t" style="left:191px;top:144.9px;width:44.75px;text-align:right;font-size:10px;letter-spacing:0.75px;color:#222">48400</div>
<div class="t" style="left:544px;top:144.9px;font-size:10px;letter-spacing:0.75px;color:#222">80</div>
<div class="t" style="left:290.29999999999995px;top:138.29999999999998px;width:200px;text-align:center;font-size:9.5px;letter-spacing:0.56px;color:#222">ACK</div>
<div class="t" style="left:604.4000000000001px;top:141.29999999999998px;font-size:9.6px;letter-spacing:0.52px;color:#222">Seq = 1 Ack = 1</div>
<div class="t" style="left:21px;top:163.4px;width:65.5px;text-align:right;font-size:13px;letter-spacing:0.5px;color:#111">4.519707</div>
<div class="t" style="left:191px;top:168.9px;width:44.75px;text-align:right;font-size:10px;letter-spacing:0.75px;color:#222">48400</div>
<div class="t" style="left:544px;top:168.9px;font-size:10px;letter-spacing:0.75px;color:#222">80</div>
<div class="t" style="left:290.29999999999995px;top:162.29999999999998px;width:200px;text-align:center;font-size:9.5px;letter-spacing:0.56px;color:#222">PSH, ACK - Len: 37</div>
<div class="t" style="left:604.4000000000001px;top:165.29999999999998px;font-size:9.6px;letter-spacing:0.52px;color:#222">Seq = 1 Ack = 1</div>
<div class="t" style="left:21px;top:187.4px;width:65.5px;text-align:right;font-size:13px;letter-spacing:0.5px;color:#111">4.519718</div>
<div class="t" style="left:191px;top:192.9px;width:44.75px;text-align:right;font-size:10px;letter-spacing:0.75px;color:#222">48400</div>
<div class="t" style="left:544px;top:192.9px;font-size:10px;letter-spacing:0.75px;color:#222">80</div>
<div class="t" style="left:290.29999999999995px;top:186.29999999999998px;width:200px;text-align:center;font-size:9.5px;letter-spacing:0.56px;color:#222">ACK</div>
<div class="t" style="left:604.4000000000001px;top:189.29999999999998px;font-size:9.6px;letter-spacing:0.52px;color:#222">Seq = 1 Ack = 38</div>
<div class="t" style="left:21px;top:211.4px;width:65.5px;text-align:right;font-size:13px;letter-spacing:0.5px;color:#111">4.520514</div>
<div class="t" style="left:191px;top:216.9px;width:44.75px;text-align:right;font-size:10px;letter-spacing:0.75px;color:#222">48400</div>
<div class="t" style="left:544px;top:216.9px;font-size:10px;letter-spacing:0.75px;color:#222">80</div>
<div class="t" style="left:290.29999999999995px;top:210.29999999999998px;width:200px;text-align:center;font-size:9.5px;letter-spacing:0.56px;color:#222">PSH, ACK - Len: 238</div>
<div class="t" style="left:604.4000000000001px;top:213.29999999999998px;font-size:9.6px;letter-spacing:0.52px;color:#222">Seq = 1 Ack = 38</div>
<div class="t" style="left:21px;top:235.4px;width:65.5px;text-align:right;font-size:13px;letter-spacing:0.5px;color:#111">4.520544</div>
<div class="t" style="left:191px;top:240.9px;width:44.75px;text-align:right;font-size:10px;letter-spacing:0.75px;color:#222">48400</div>
<div class="t" style="left:544px;top:240.9px;font-size:10px;letter-spacing:0.75px;color:#222">80</div>
<div class="t" style="left:290.29999999999995px;top:234.29999999999998px;width:200px;text-align:center;font-size:9.5px;letter-spacing:0.56px;color:#222">PSH, ACK - Len: 612</div>
<div class="t" style="left:604.4000000000001px;top:237.29999999999998px;font-size:9.6px;letter-spacing:0.52px;color:#222">Seq = 239 Ack = 38</div>
<div class="t" style="left:21px;top:259.4px;width:65.5px;text-align:right;font-size:13px;letter-spacing:0.5px;color:#111">4.520776</div>
<div class="t" style="left:191px;top:264.9px;width:44.75px;text-align:right;font-size:10px;letter-spacing:0.75px;color:#222">48400</div>
<div class="t" style="left:544px;top:264.9px;font-size:10px;letter-spacing:0.75px;color:#222">80</div>
<div class="t" style="left:290.29999999999995px;top:258.3px;width:200px;text-align:center;font-size:9.5px;letter-spacing:0.56px;color:#222">ACK</div>
<div class="t" style="left:604.4000000000001px;top:261.3px;font-size:9.6px;letter-spacing:0.52px;color:#222">Seq = 38 Ack = 239</div>
<div class="t" style="left:21px;top:283.40000000000003px;width:65.5px;text-align:right;font-size:13px;letter-spacing:0.5px;color:#111">4.520784</div>
<div class="t" style="left:191px;top:288.90000000000003px;width:44.75px;text-align:right;font-size:10px;letter-spacing:0.75px;color:#222">48400</div>
<div class="t" style="left:544px;top:288.90000000000003px;font-size:10px;letter-spacing:0.75px;color:#222">80</div>
<div class="t" style="left:290.29999999999995px;top:282.3px;width:200px;text-align:center;font-size:9.5px;letter-spacing:0.56px;color:#222">ACK</div>
<div class="t" style="left:604.4000000000001px;top:285.3px;font-size:9.6px;letter-spacing:0.52px;color:#222">Seq = 38 Ack = 851</div>
<div class="t" style="left:21px;top:307.40000000000003px;width:65.5px;text-align:right;font-size:13px;letter-spacing:0.5px;color:#111">4.521322</div>
<div class="t" style="left:191px;top:312.90000000000003px;width:44.75px;text-align:right;font-size:10px;letter-spacing:0.75px;color:#222">48400</div>
<div class="t" style="left:544px;top:312.90000000000003px;font-size:10px;letter-spacing:0.75px;color:#222">80</div>
<div class="t" style="left:290.29999999999995px;top:306.3px;width:200px;text-align:center;font-size:9.5px;letter-spacing:0.56px;color:#222">PSH, ACK - Len: 37</div>
<div class="t" style="left:604.4000000000001px;top:309.3px;font-size:9.6px;letter-spacing:0.52px;color:#222">Seq = 38 Ack = 851</div>
<div class="t" style="left:21px;top:331.40000000000003px;width:65.5px;text-align:right;font-size:13px;letter-spacing:0.5px;color:#111">4.521534</div>
<div class="t" style="left:191px;top:336.90000000000003px;width:44.75px;text-align:right;font-size:10px;letter-spacing:0.75px;color:#222">48400</div>
<div class="t" style="left:544px;top:336.90000000000003px;font-size:10px;letter-spacing:0.75px;color:#222">80</div>
<div class="t" style="left:290.29999999999995px;top:330.3px;width:200px;text-align:center;font-size:9.5px;letter-spacing:0.56px;color:#222">PSH, ACK - Len: 238</div>
<div class="t" style="left:604.4000000000001px;top:333.3px;font-size:9.6px;letter-spacing:0.52px;color:#222">Seq = 851 Ack = 75</div>
<div class="t" style="left:21px;top:355.40000000000003px;width:65.5px;text-align:right;font-size:13px;letter-spacing:0.5px;color:#111">4.521642</div>
<div class="t" style="left:191px;top:360.90000000000003px;width:44.75px;text-align:right;font-size:10px;letter-spacing:0.75px;color:#222">48400</div>
<div class="t" style="left:544px;top:360.90000000000003px;font-size:10px;letter-spacing:0.75px;color:#222">80</div>
<div class="t" style="left:290.29999999999995px;top:354.3px;width:200px;text-align:center;font-size:9.5px;letter-spacing:0.56px;color:#222">PSH, ACK - Len: 612</div>
<div class="t" style="left:604.4000000000001px;top:357.3px;font-size:9.6px;letter-spacing:0.52px;color:#222">Seq = 1089 Ack = 75</div>
<div class="t" style="left:21px;top:379.40000000000003px;width:65.5px;text-align:right;font-size:13px;letter-spacing:0.5px;color:#111">4.521986</div>
<div class="t" style="left:191px;top:384.90000000000003px;width:44.75px;text-align:right;font-size:10px;letter-spacing:0.75px;color:#222">48400</div>
<div class="t" style="left:544px;top:384.90000000000003px;font-size:10px;letter-spacing:0.75px;color:#222">80</div>
<div class="t" style="left:290.29999999999995px;top:378.3px;width:200px;text-align:center;font-size:9.5px;letter-spacing:0.56px;color:#222">ACK</div>
<div class="t" style="left:604.4000000000001px;top:381.3px;font-size:9.6px;letter-spacing:0.52px;color:#222">Seq = 75 Ack = 1701</div>
<div class="t" style="left:21px;top:403.40000000000003px;width:65.5px;text-align:right;font-size:13px;letter-spacing:0.5px;color:#111">4.522457</div>
<div class="t" style="left:191px;top:408.90000000000003px;width:44.75px;text-align:right;font-size:10px;letter-spacing:0.75px;color:#222">48400</div>
<div class="t" style="left:544px;top:408.90000000000003px;font-size:10px;letter-spacing:0.75px;color:#222">80</div>
<div class="t" style="left:290.29999999999995px;top:402.3px;width:200px;text-align:center;font-size:9.5px;letter-spacing:0.56px;color:#222">PSH, ACK - Len: 37</div>
<div class="t" style="left:604.4000000000001px;top:405.3px;font-size:9.6px;letter-spacing:0.52px;color:#222">Seq = 75 Ack = 1701</div>
<div class="a" style="left:0;top:22px;width:34px;height:599px;background:linear-gradient(90deg,rgba(0,0,0,0.2),rgba(0,0,0,0.13) 30%,rgba(0,0,0,0.05) 62%,rgba(0,0,0,0))"></div>
<div class="t" style="left:20.899999999999977px;top:469px;font-size:10.5px;letter-spacing:0.15px;font-style:italic;color:#333">Packet 536: Seq = 851 Ack = 75</div>
<div class="a" style="left:22px;top:501px;width:14px;height:14px;border-radius:3px;background:#d6d6d6"></div>
<svg class="a" style="left:22px;top:501px" width="14" height="14"><path d="M3.5 7.5L6 10.5L11 3.5" stroke="#fff" stroke-width="1.5" fill="none"/></svg>
<div class="t" style="left:40.39999999999998px;top:502.5px;font-size:13.9px;color:#222">Limit to display filter</div>
<div class="t" style="left:252.5px;top:502.5px;font-size:13.4px;color:#222">Flow type:</div>
<div class="a" style="left:323px;top:499px;width:134px;height:20px;background:#fff;border-radius:4px;box-shadow:0 0 0 0.5px #bdbdbd,0 1px 1px rgba(0,0,0,0.15)"></div>
<div class="a" style="left:440px;top:499px;width:17px;height:20px;background:#d3d3d3;border-radius:0 4px 4px 0"></div>
<svg class="a" style="left:440px;top:499px" width="17" height="20"><path d="M5.5 8L8.5 5L11.5 8M5.5 12L8.5 15L11.5 12" stroke="#fff" stroke-width="1.2" fill="none"/></svg>
<div class="t" style="left:332px;top:503.5px;font-size:12.9px;color:#222">TCP Flows</div>
<div class="t" style="left:549.7px;top:502.5px;font-size:13.3px;color:#222">Addresses:</div>
<div class="a" style="left:624px;top:499px;width:101px;height:20px;background:#fff;border-radius:4px;box-shadow:0 0 0 0.5px #bdbdbd,0 1px 1px rgba(0,0,0,0.15)"></div>
<div class="a" style="left:708px;top:499px;width:17px;height:20px;background:#d3d3d3;border-radius:0 4px 4px 0"></div>
<svg class="a" style="left:708px;top:499px" width="17" height="20"><path d="M5.5 8L8.5 5L11.5 8M5.5 12L8.5 15L11.5 12" stroke="#fff" stroke-width="1.2" fill="none"/></svg>
<div class="t" style="left:633px;top:503.5px;font-size:12.9px;color:#222">Any</div>
<div class="a" style="left:657.5px;top:541px;width:64.0px;height:20px;background:#fff;border-radius:4px;box-shadow:0 0 0 0.5px #bdbdbd,0 1px 1px rgba(0,0,0,0.18)"></div>
<div class="t" style="left:657.5px;top:544px;width:64.0px;text-align:center;font-size:13.4px;color:#222">Reset</div>
<div class="a" style="left:21px;top:583px;width:56px;height:20px;background:#fff;border-radius:4px;box-shadow:0 0 0 0.5px #bdbdbd,0 1px 1px rgba(0,0,0,0.18)"></div>
<div class="t" style="left:21px;top:586px;width:56px;text-align:center;font-size:13.4px;color:#222">Help</div>
<div class="a" style="left:560.5px;top:583px;width:64.0px;height:20px;background:#fff;border-radius:4px;box-shadow:0 0 0 0.5px #bdbdbd,0 1px 1px rgba(0,0,0,0.18)"></div>
<div class="t" style="left:560.5px;top:586px;width:64.0px;text-align:center;font-size:13.4px;color:#222">Close</div>
<div class="a" style="left:639.5px;top:583px;width:88.0px;height:20px;background:#fff;border-radius:4px;box-shadow:0 0 0 0.5px #bdbdbd,0 1px 1px rgba(0,0,0,0.18)"></div>
<div class="t" style="left:639.5px;top:586px;width:88.0px;text-align:center;font-size:13.4px;color:#222">Save As…</div>
</div>
</body></html>
